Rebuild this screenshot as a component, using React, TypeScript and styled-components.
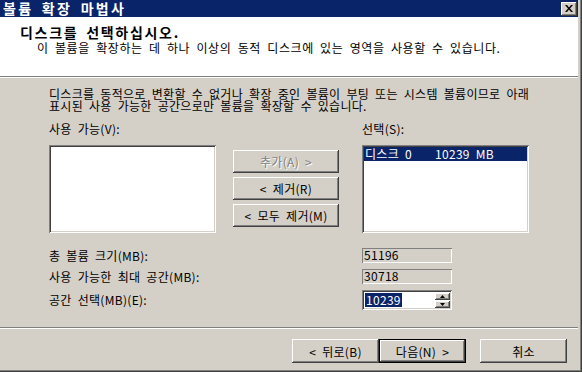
import styled, { createGlobalStyle, css } from 'styled-components';

const GlobalStyle = createGlobalStyle`
  html, body {
    margin: 0;
    padding: 0;
    background: #d4d0c8;
  }
  * {
    box-sizing: border-box;
  }
`;

const FONT = `"Noto Sans CJK KR", "Noto Sans", sans-serif`;

const raised = css`
  box-shadow:
    inset -1px -1px #404040,
    inset 1px 1px #ffffff,
    inset -2px -2px #808080,
    inset 2px 2px #d4d0c8;
`;

const sunken = css`
  box-shadow:
    inset 1px 1px #808080,
    inset -1px -1px #ffffff,
    inset 2px 2px #404040,
    inset -2px -2px #d4d0c8;
`;

export default function App() {
  return (
    <>
      <GlobalStyle />
      <Window>
        <Client>
          <TitleBar>
            <TitleText>볼륨 확장 마법사</TitleText>
            <CloseButton>
              <svg width="8" height="7" viewBox="0 0 8 7">
                <path d="M0 0h2l2 2.5L6 0h2L5 3.5 8 7H6L4 4.5 2 7H0l3-3.5z" fill="#000" />
              </svg>
            </CloseButton>
          </TitleBar>

          <Header>
            <Heading>디스크를 선택하십시오.</Heading>
            <SubHeading>이 볼륨을 확장하는 데 하나 이상의 동적 디스크에 있는 영역을 사용할 수 있습니다.</SubHeading>
          </Header>

          <Body>
            <Description>
              <div>디스크를 동적으로 변환할 수 없거나 확장 중인 볼륨이 부팅 또는 시스템 볼륨이므로 아래</div>
              <div>표시된 사용 가능한 공간으로만 볼륨을 확장할 수 있습니다.</div>
            </Description>

            <Picker>
              <Label>사용 가능(V):</Label>
              <span />
              <Label>선택(S):</Label>

              <ListBox />
              <MoveButtons>
                <PushButton $disabled>추가(A) &gt;</PushButton>
                <PushButton>&lt; 제거(R)</PushButton>
                <PushButton>&lt; 모두 제거(M)</PushButton>
              </MoveButtons>
              <ListBox>
                <ListItem $selected>
                  <span>디스크 0</span>
                  <span>10239 MB</span>
                </ListItem>
              </ListBox>
            </Picker>

            <Fields>
              <Label>총 볼륨 크기(MB):</Label>
              <StaticBox>51196</StaticBox>
              <Label>사용 가능한 최대 공간(MB):</Label>
              <StaticBox>30718</StaticBox>
              <Label>공간 선택(MB)(E):</Label>
              <SpinEdit>
                <Selected>10239</Selected>
                <SpinButtons>
                  <SpinArrow>
                    <svg width="5" height="3" viewBox="0 0 5 3">
                      <path d="M2.5 0L5 3H0z" fill="#000" />
                    </svg>
                  </SpinArrow>
                  <SpinArrow>
                    <svg width="5" height="3" viewBox="0 0 5 3">
                      <path d="M0 0h5L2.5 3z" fill="#000" />
                    </svg>
                  </SpinArrow>
                </SpinButtons>
              </SpinEdit>
            </Fields>
          </Body>

          <Footer>
            <WizardButton>&lt; 뒤로(B)</WizardButton>
            <WizardButton $default>다음(N) &gt;</WizardButton>
            <CancelButton>취소</CancelButton>
          </Footer>
        </Client>
      </Window>
    </>
  );
}

const Window = styled.div`
  width: 582px;
  height: 372px;
  overflow: hidden;
  background: #d4d0c8;
  padding: 0 4px 2px 0;
  box-shadow:
    inset -1px -1px #404040,
    inset -2px -2px #808080;
  font-family: ${FONT};
  font-size: 12px;
  letter-spacing: 0.3px;
  word-spacing: 3px;
  color: #000;
`;

const Client = styled.div`
  width: 578px;
  height: 370px;
  display: flex;
  flex-direction: column;
`;

const TitleBar = styled.div`
  height: 17px;
  flex-shrink: 0;
  background: #0a246a;
  display: flex;
  align-items: center;
  justify-content: space-between;
  padding: 0 1px 0 3px;
`;

const TitleText = styled.span`
  color: #fff;
  font-weight: 700;
  font-size: 14px;
  letter-spacing: 2.3px;
  line-height: 15px;
`;

const CloseButton = styled.div`
  width: 16px;
  height: 14px;
  background: #d4d0c8;
  ${raised};
  display: grid;
  place-items: center;
  padding-right: 1px;
`;

const Header = styled.div`
  height: 60px;
  flex-shrink: 0;
  background: #fff;
  border-bottom: 1px solid #808080;
  padding: 8px 0 0 20px;
  display: flex;
  flex-direction: column;
  gap: 2px;
`;

const Heading = styled.div`
  font-weight: 700;
  font-size: 14px;
  letter-spacing: 1.7px;
  line-height: 14px;
`;

const SubHeading = styled.div`
  padding-left: 17px;
  letter-spacing: 0.6px;
  line-height: 13px;
`;

const Body = styled.div`
  flex: 1;
  border-top: 1px solid #fff;
  border-bottom: 1px solid #808080;
  padding: 10px 0 0 49px;
  display: flex;
  flex-direction: column;
`;

const Description = styled.div`
  line-height: 12px;
`;

const Picker = styled.div`
  margin-top: 11px;
  display: grid;
  grid-template-columns: 167px 146px 167px;
  grid-template-rows: 12px 88px;
  row-gap: 10px;
`;

const Label = styled.div`
  line-height: 12px;
  white-space: nowrap;
`;

const ListBox = styled.div`
  background: #fff;
  ${sunken};
  padding: 2px;
`;

const ListItem = styled.div<{ $selected?: boolean }>`
  height: 14px;
  line-height: 14px;
  display: grid;
  grid-template-columns: 70px 1fr;
  padding-left: 1px;
  white-space: nowrap;
  background: ${({ $selected }) => ($selected ? '#0a246a' : 'transparent')};
  color: ${({ $selected }) => ($selected ? '#fff' : '#000')};
`;

const MoveButtons = styled.div`
  padding: 5px 0 0 17px;
  display: flex;
  flex-direction: column;
  gap: 4px;
`;

const PushButton = styled.div<{ $disabled?: boolean }>`
  width: 106px;
  height: 23px;
  background: #d4d0c8;
  ${raised};
  display: flex;
  align-items: center;
  justify-content: center;
  white-space: nowrap;
  color: ${({ $disabled }) => ($disabled ? '#808080' : '#000')};
  text-shadow: ${({ $disabled }) => ($disabled ? '1px 1px #fff' : 'none')};
`;

const Fields = styled.div`
  margin-top: 15px;
  display: grid;
  grid-template-columns: 313px 90px;
  grid-template-rows: 15px 15px 20px;
  row-gap: 6px;
  align-items: center;
`;

const StaticBox = styled.div`
  height: 15px;
  line-height: 13px;
  padding-left: 2px;
  background: #d4d0c8;
  box-shadow: inset 1px 1px #808080, inset -1px -1px #fff;
`;

const SpinEdit = styled.div`
  height: 20px;
  background: #fff;
  ${sunken};
  display: flex;
  align-items: center;
  justify-content: space-between;
  padding: 2px 2px 2px 3px;
`;

const Selected = styled.span`
  background: #0a246a;
  color: #fff;
  line-height: 14px;
  padding: 0 1px;
`;

const SpinButtons = styled.div`
  display: flex;
  flex-direction: column;
  gap: 1px;
`;

const SpinArrow = styled.div`
  width: 15px;
  height: 7px;
  background: #d4d0c8;
  ${raised};
  display: grid;
  place-items: center;
`;

const Footer = styled.div`
  height: 42px;
  flex-shrink: 0;
  border-top: 1px solid #fff;
  padding: 10px 11px 0 0;
  display: flex;
  justify-content: flex-end;
  align-items: flex-start;
`;

const WizardButton = styled.div<{ $default?: boolean }>`
  width: 87px;
  height: 24px;
  background: #d4d0c8;
  display: flex;
  align-items: center;
  justify-content: center;
  white-space: nowrap;
  ${({ $default }) =>
    $default
      ? css`
          box-shadow:
            inset 0 0 0 1px #000,
            inset -2px -2px #404040,
            inset 2px 2px #ffffff,
            inset -3px -3px #808080;
        `
      : raised};
`;

const CancelButton = styled(WizardButton)`
  margin-left: 14px;
`;
